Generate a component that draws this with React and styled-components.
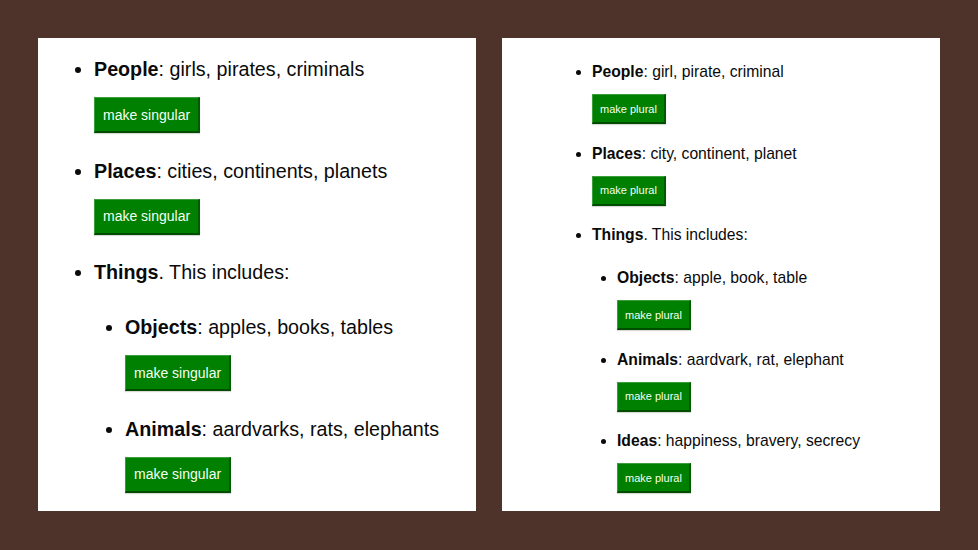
import React from "react";
import styled, { createGlobalStyle } from "styled-components";

const Global = createGlobalStyle`
    html, body {
        margin: 0;
        padding: 0;
        background: #4e332b;
    }
    body {
        font-family: "Liberation Sans", Arial, sans-serif;
        color: #0a0a0a;
    }
`;

const Stage = styled.div`
    width: 978px;
    height: 550px;
    display: grid;
    grid-template-columns: 438px 438px;
    column-gap: 26px;
    padding: 38px 0 0 38px;
    box-sizing: border-box;
`;

const Panel = styled.div`
    height: 473px;
    background: #fff;
    overflow: hidden;
    padding-top: ${props => props.$top}px;
    box-sizing: border-box;
`;

const List = styled.ul`
    margin: 0;
    padding-left: ${props => props.$indent}px;
    font-size: ${props => props.$size}px;
    line-height: ${props => props.$lh}px;
    list-style: disc;
`;

const Item = styled.li`
    margin-bottom: ${props => props.$gap}px;

    & > b {
        font-weight: bold;
    }
`;

const SubList = styled(List)`
    margin-top: ${props => props.$top}px;
`;

const Button = styled.button`
    display: block;
    margin-top: ${props => props.$top}px;
    height: ${props => props.$h}px;
    padding: 0 ${props => props.$pad}px;
    font-family: "Liberation Sans", Arial, sans-serif;
    font-size: ${props => props.$size}px;
    color: #f4fff4;
    background: #008000;
    border-style: solid;
    border-width: 1px 2px 2px 1px;
    border-color: #3c9d3c #005a00 #004d00 #3c9d3c;
    box-shadow: 0 1px 1px rgba(0, 0, 0, 0.15);
    cursor: pointer;
`;

// left panel is the bigger copy, right one the smaller
const big = { size: 19.7, lh: 24, btnTop: 16, btnH: 36, btnPad: 8, btnSize: 14, gap: 25.5, subTop: 31 };
const small = { size: 15.7, lh: 19, btnTop: 13, btnH: 30, btnPad: 7, btnSize: 11, gap: 19.5, subTop: 24 };

function Entry({ s, name, words, label }) {
    return (
        <Item $gap={s.gap}>
            <b>{name}</b>: {words}
            <Button $top={s.btnTop} $h={s.btnH} $pad={s.btnPad} $size={s.btnSize}>{label}</Button>
        </Item>
    );
}

function Categories({ s, indent, subIndent, label, data }) {
    return (
        <List $indent={indent} $size={s.size} $lh={s.lh}>
            <Entry s={s} name="People" words={data.people} label={label} />
            <Entry s={s} name="Places" words={data.places} label={label} />
            <Item $gap={s.gap}>
                <b>Things</b>. This includes:
                <SubList $indent={subIndent} $size={s.size} $lh={s.lh} $top={s.subTop}>
                    <Entry s={s} name="Objects" words={data.objects} label={label} />
                    <Entry s={s} name="Animals" words={data.animals} label={label} />
                    {data.ideas && <Entry s={s} name="Ideas" words={data.ideas} label={label} />}
                </SubList>
            </Item>
        </List>
    );
}

// left view is cut off below Animals, so no Ideas there
const plural = {
    people: "girls, pirates, criminals",
    places: "cities, continents, planets",
    objects: "apples, books, tables",
    animals: "aardvarks, rats, elephants",
};

const singular = {
    people: "girl, pirate, criminal",
    places: "city, continent, planet",
    objects: "apple, book, table",
    animals: "aardvark, rat, elephant",
    ideas: "happiness, bravery, secrecy",
};

export default function App() {
    return (
        <>
            <Global />
            <Stage>
                <Panel $top={19}>
                    <Categories s={big} indent={56} subIndent={31} label="make singular" data={plural} />
                </Panel>
                <Panel $top={24}>
                    <Categories s={small} indent={90} subIndent={25} label="make plural" data={singular} />
                </Panel>
            </Stage>
        </>
    );
}
